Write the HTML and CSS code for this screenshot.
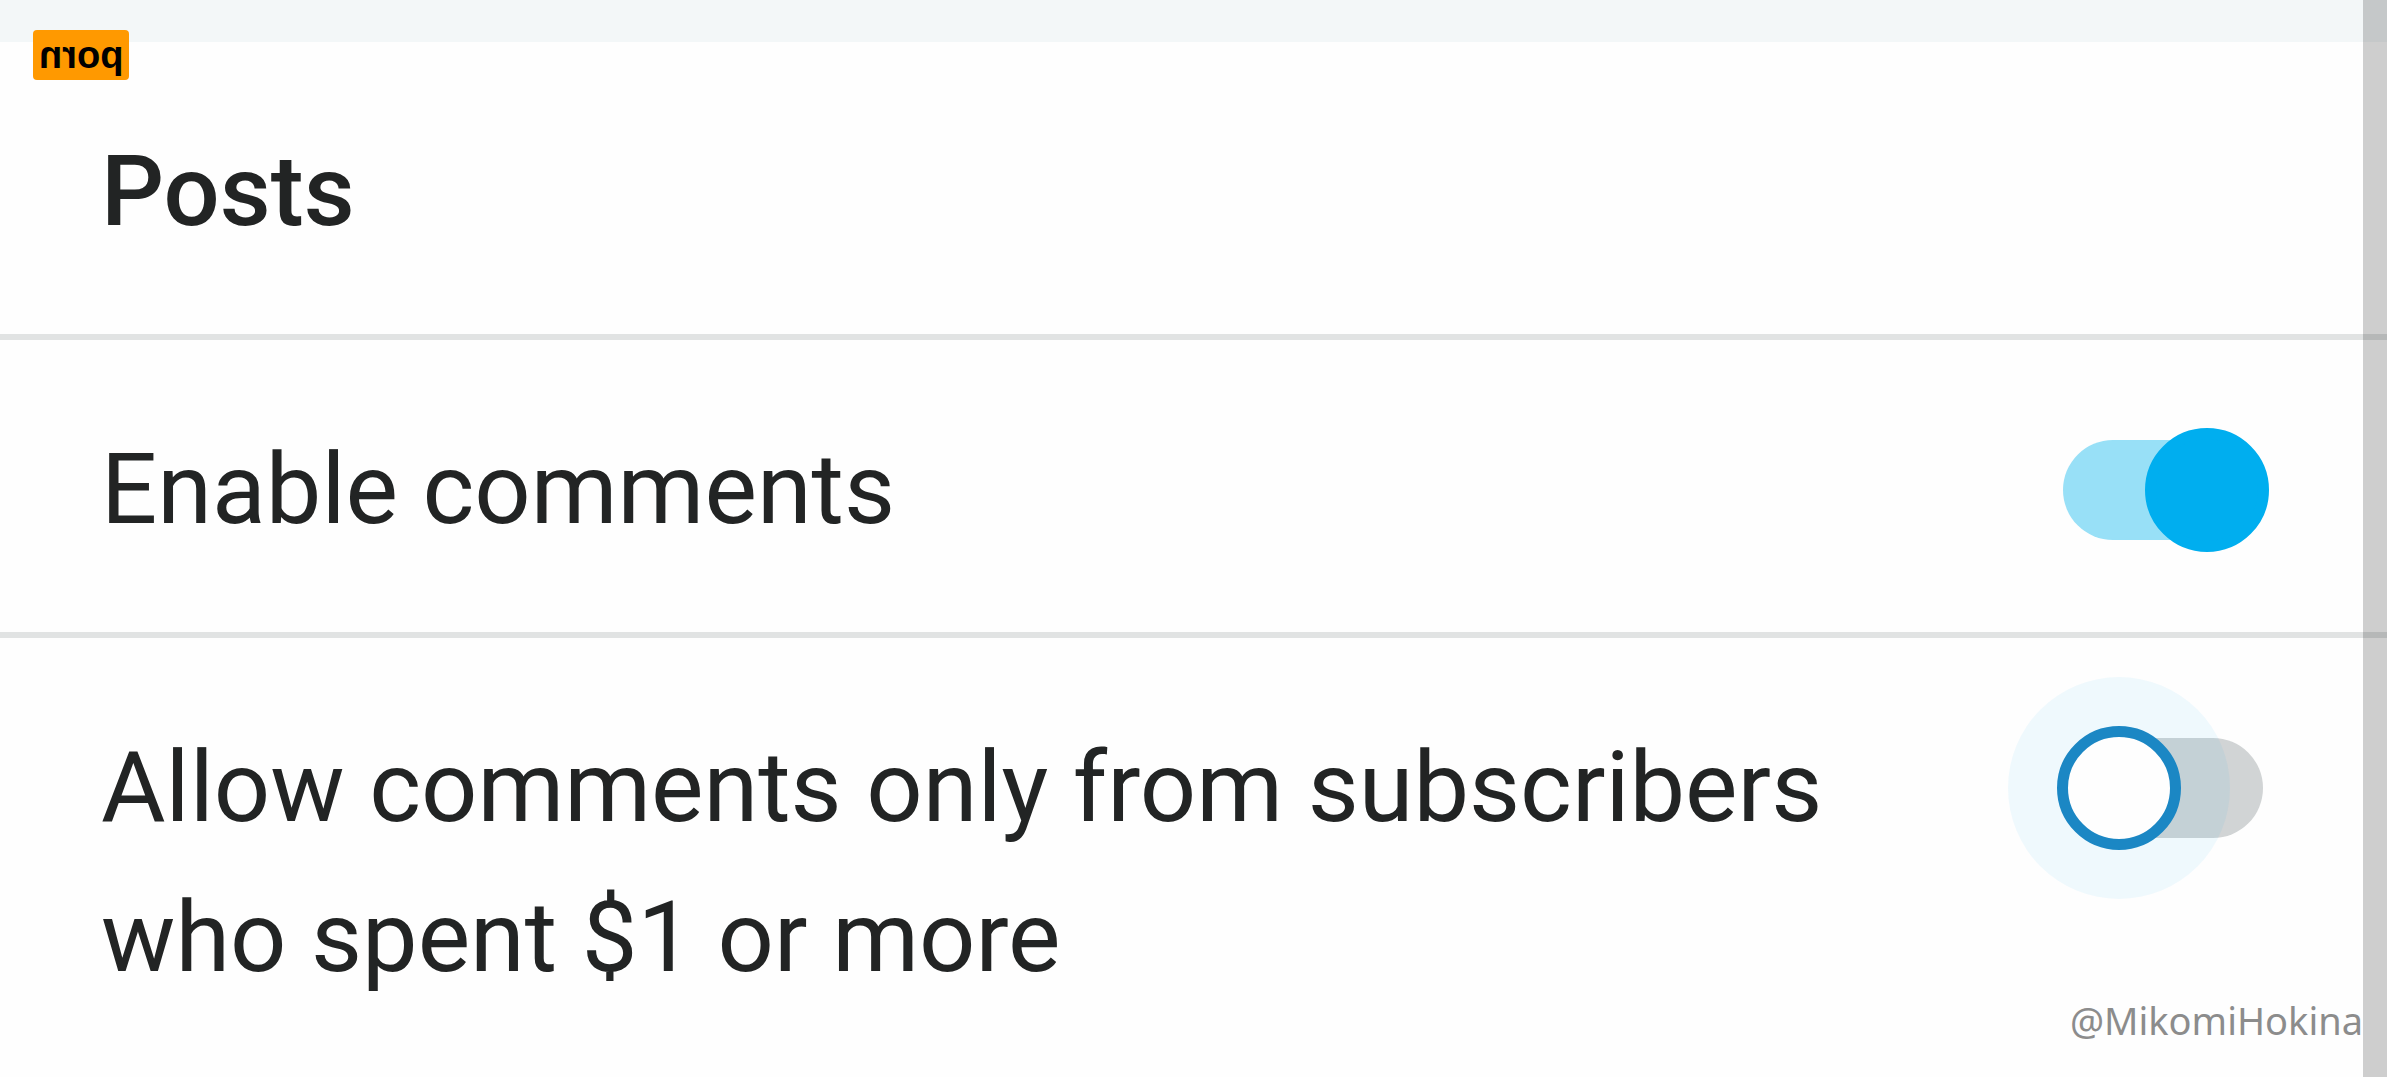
FILE: index.html
```html
<!DOCTYPE html>
<html lang="en">
<head>
  <meta charset="UTF-8" />
  <meta name="viewport" content="width=device-width, initial-scale=1" />
  <title>Posts</title>
  <link rel="stylesheet" href="styles.css">
</head>
<body>
  <div class="topbar"></div>

  <main class="settings">
    <header class="row">
      <h1>Posts</h1>
    </header>

    <div class="row">
      <label for="comments">Enable comments</label>
      <input type="checkbox" class="switch" id="comments" checked />
    </div>

    <div class="row">
      <label for="subscribers">Allow comments only from subscribers who spent $1 or more</label>
      <input type="checkbox" class="switch active" id="subscribers" />
    </div>
  </main>

  <div class="badge"><span>porn</span></div>
  <div class="credit">@MikomiHokina</div>
  <div class="scrollbar"></div>
</body>
</html>
```

FILE: styles.css
```css
*,
*::before {
  box-sizing: border-box;
}

body {
  margin: 0;
  min-height: 100vh;
  position: relative;
  background: #fefefe;
  color: #222424;
  font-family: Roboto, sans-serif;
  font-size: 99px;
  line-height: 150px;
}

.topbar {
  height: 42px;
  background: #f3f7f8;
}

.row {
  display: flex;
  align-items: flex-start;
  justify-content: space-between;
  gap: 120px;
  padding: 74px 124px 68px 101px;
}

.row + .row {
  border-top: 6px solid #e1e3e3;
}

.row:last-child {
  padding-bottom: 40px;
}

h1 {
  margin: 0;
  font-size: 99px;
  font-weight: 500;
}

/* Toggle switch */
.switch {
  appearance: none;
  flex: none;
  position: relative;
  width: 200px;
  height: 100px;
  margin: 26px 0 24px;
  border-radius: 50px;
  background: #d1d4d5;
  cursor: pointer;
}

.switch::before {
  content: "";
  position: absolute;
  top: -12px;
  left: -6px;
  width: 124px;
  height: 124px;
  border: 11px solid #1b87c4;
  border-radius: 50%;
  background: #fefefe;
}

.switch:checked {
  background: #98e0f7;
}

.switch:checked::before {
  left: auto;
  right: -6px;
  border-color: #00aeef;
  background: #00aeef;
}

.switch.active::before {
  box-shadow: 0 0 0 49px rgba(0, 175, 240, 0.06);
}

/* Overlays */
.badge {
  position: absolute;
  top: 30px;
  left: 33px;
  padding: 0 6px;
  border-radius: 4px;
  background: #ff9900;
  color: #000;
  font: bold 38px/50px "Liberation Sans", sans-serif;
}

.badge span {
  display: block;
  transform: scaleX(-1);
}

.credit {
  position: absolute;
  right: 24px;
  bottom: 32px;
  color: #8c8c8c;
  font: 38px/50px "Noto Sans", sans-serif;
}

.scrollbar {
  position: fixed;
  top: 0;
  right: 0;
  bottom: 0;
  width: 24px;
  background: rgba(0, 0, 0, 0.19);
}
```
